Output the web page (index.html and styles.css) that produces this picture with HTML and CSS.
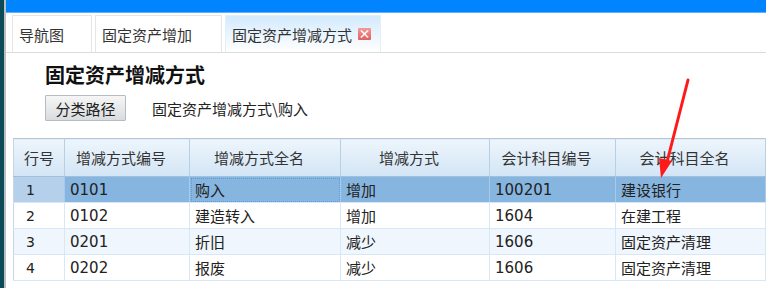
FILE: index.html
```html
<!DOCTYPE html>
<html lang="zh-CN">
<head>
  <meta charset="UTF-8" />
  <title>固定资产增减方式</title>
  <link rel="stylesheet" href="styles.css">
</head>
<body>
  <div class="app">
    <div class="edge"></div>
    <div class="window">
      <div class="topbar"></div>

      <div class="tabs">
        <div class="tab">导航图</div>
        <div class="tab">固定资产增加</div>
        <div class="tab active">固定资产增减方式 <span class="tab-close">&times;</span></div>
      </div>

      <div class="content">
        <h1 class="page-title">固定资产增减方式</h1>
        <div class="path-bar">
          <button class="btn">分类路径</button>
          <span class="path-text">固定资产增减方式\购入</span>
        </div>

        <table class="grid">
          <colgroup>
            <col style="width:51px">
            <col style="width:125px">
            <col style="width:151px">
            <col style="width:149px">
            <col style="width:126px">
            <col style="width:150px">
          </colgroup>
          <thead>
            <tr>
              <th>行号</th>
              <th>增减方式编号</th>
              <th>增减方式全名</th>
              <th>增减方式</th>
              <th>会计科目编号</th>
              <th>会计科目全名</th>
            </tr>
          </thead>
          <tbody>
            <tr class="selected">
              <td class="rownum">1</td>
              <td>0101</td>
              <td class="focus">购入</td>
              <td>增加</td>
              <td>100201</td>
              <td>建设银行</td>
            </tr>
            <tr>
              <td class="rownum">2</td>
              <td>0102</td>
              <td>建造转入</td>
              <td>增加</td>
              <td>1604</td>
              <td>在建工程</td>
            </tr>
            <tr class="alt">
              <td class="rownum">3</td>
              <td>0201</td>
              <td>折旧</td>
              <td>减少</td>
              <td>1606</td>
              <td>固定资产清理</td>
            </tr>
            <tr>
              <td class="rownum">4</td>
              <td>0202</td>
              <td>报废</td>
              <td>减少</td>
              <td>1606</td>
              <td>固定资产清理</td>
            </tr>
          </tbody>
        </table>
      </div>
    </div>
  </div>

  <!-- red annotation arrow drawn over the grid -->
  <svg class="arrow" width="766" height="288" viewBox="0 0 766 288">
    <line x1="688" y1="80" x2="667" y2="162" stroke="#ff1a1a" stroke-width="3" stroke-linecap="round"/>
    <polygon points="661,178 659,158 672,161" fill="#ff1a1a"/>
  </svg>
</body>
</html>
```

FILE: styles.css
```css
html, body {
  margin: 0;
  padding: 0;
  width: 766px;
  height: 288px;
  overflow: hidden;
  background: #ffffff;
  font-family: "DejaVu Sans", "Noto Sans CJK SC", sans-serif;
  color: #222;
}

.app {
  display: flex;
  height: 288px;
}

.edge {
  width: 4px;
  background: #0b4a57;
}

.window {
  flex: 1;
  border-left: 2px solid #b9c0c4;
  background: #fff;
}

.topbar {
  height: 12px;
  background: #0084ff;
  border-bottom: 1px solid #5fb0ff;
}

.tabs {
  display: flex;
  gap: 3px;
  padding: 2px 0 0 6px;
  border-bottom: 1px solid #dcdcdc;
  height: 37px;
}

.tab {
  box-sizing: border-box;
  display: flex;
  align-items: center;
  padding: 0 6px;
  font-size: 15px;
  font-family: "Noto Sans CJK SC", sans-serif;
  color: #333;
  background: #fff;
  border: 1px solid #e6e6e6;
  border-bottom: none;
}

.tab:nth-child(1) { width: 80px; }
.tab:nth-child(2) { width: 127px; }
.tab.active {
  width: 156px;
  background: linear-gradient(#d3eafc, #ffffff);
  border-color: #e2eef8;
}

.tab-close {
  display: inline-block;
  width: 13px;
  height: 12px;
  margin-left: 6px;
  line-height: 11px;
  font-size: 12px;
  font-weight: bold;
  text-align: center;
  color: #fff;
  background: linear-gradient(#f29a9a, #e06060);
  border-radius: 1px;
}

.content {
  padding: 0 0 0 7px;
}

.page-title {
  margin: 10px 0 0 32px;
  font-size: 20px;
  line-height: 24px;
  font-weight: bold;
  font-family: "Noto Sans CJK SC", sans-serif;
  color: #111;
}

.path-bar {
  display: flex;
  align-items: center;
  gap: 26px;
  margin: 8px 0 0 32px;
}

.btn {
  width: 81px;
  height: 26px;
  padding: 0;
  font-size: 15px;
  font-family: "Noto Sans CJK SC", sans-serif;
  color: #222;
  background: linear-gradient(#f6f6f6, #d9dcdf);
  border: 1px solid #b5bcc4;
  border-radius: 1px;
}

.path-text {
  font-size: 15px;
  font-family: "Noto Sans CJK SC", sans-serif;
  color: #222;
}

.grid {
  margin-top: 17px;
  border-collapse: collapse;
  table-layout: fixed;
  width: 752px;
  border-top: 1px solid #b3c6d6;
  border-left: 1px solid #c9d6e2;
  font-size: 15px;
}

.grid th {
  height: 37px;
  padding: 0 12px 0 0;
  font-weight: normal;
  color: #333;
  text-align: center;
  font-family: "Noto Sans CJK SC", sans-serif;
  background: linear-gradient(#edf5fc, #d3e5f5);
  border-right: 1px solid #b7d0e5;
  border-bottom: 1px solid #9fc1dd;
}

.grid th:first-child {
  padding: 0;
}

.grid td {
  height: 25px;
  padding: 0 0 0 5px;
  white-space: nowrap;
  border-right: 1px solid #d8e7f5;
  border-bottom: 1px solid #d8e7f5;
  background: #fff;
}

.grid td.rownum {
  padding-left: 12px;
  font-size: 14px;
}

.grid tr.alt td {
  background: #eff6fd;
}

.grid tr.selected td {
  background: #86b5df;
  border-right-color: #a9cae8;
}

.grid tr.selected td.rownum {
  background: #b5d0ea;
}

.grid tr.selected td.focus {
  outline: 1px dotted #5aa0d8;
  outline-offset: -2px;
}

.arrow {
  position: absolute;
  top: 0;
  left: 0;
  pointer-events: none;
}
```
